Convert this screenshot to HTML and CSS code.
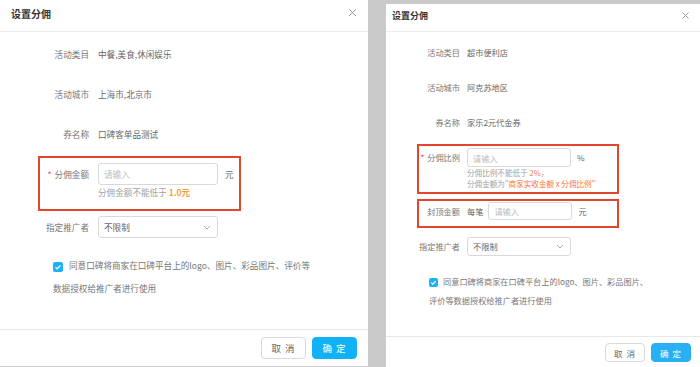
FILE: index.html
```html
<!DOCTYPE html>
<html lang="zh-CN">
<head>
    <meta charset="UTF-8">
    <meta name="viewport" content="width=device-width, initial-scale=1.0">
    <title>设置分佣</title>
    <link rel="stylesheet" href="styles.css">
</head>
<body>
    <!-- 金额模式 -->
    <div class="dialog dialog-a">
        <div class="dialog-head">
            <span class="dialog-title">设置分佣</span>
            <svg class="dialog-close" width="9" height="9" viewBox="0 0 9 9"><path d="M1 1l7 7M8 1l-7 7"/></svg>
        </div>
        <div class="dialog-body">
            <div class="info-list">
                <div class="row"><span class="row-label">活动类目</span><span class="row-value">中餐,美食,休闲娱乐</span></div>
                <div class="row"><span class="row-label">活动城市</span><span class="row-value">上海市,北京市</span></div>
                <div class="row"><span class="row-label">券名称</span><span class="row-value">口碑客单品测试</span></div>
            </div>
            <div class="mark">
                <div class="row">
                    <span class="row-label"><i class="req">*</i>分佣金额</span>
                    <div class="field">
                        <div class="field-line">
                            <input class="input" type="text" placeholder="请输入">
                            <span class="unit">元</span>
                        </div>
                        <div class="hint">分佣金额不能低于 <b class="warn">1.0元</b></div>
                    </div>
                </div>
            </div>
            <div class="row select-row">
                <span class="row-label">指定推广者</span>
                <div class="select">
                    <span>不限制</span>
                    <svg width="8" height="5" viewBox="0 0 8 5"><path d="M1 1l3 3 3-3"/></svg>
                </div>
            </div>
            <label class="agree">
                <span class="check"><svg width="10" height="10" viewBox="0 0 10 10"><path d="M2.5 5.2l1.7 1.7 3.3-3.5"/></svg></span>同意口碑将商家在口碑平台上的logo、图片、彩品图片、评价等数据授权给推广者进行使用
            </label>
        </div>
        <div class="dialog-foot">
            <button class="btn">取 消</button>
            <button class="btn btn-primary">确 定</button>
        </div>
    </div>

    <!-- 比例模式 -->
    <div class="dialog dialog-b">
        <div class="dialog-head">
            <span class="dialog-title">设置分佣</span>
            <svg class="dialog-close" width="7" height="7" viewBox="0 0 7 7"><path d="M.5 .5l6 6M6.5 .5l-6 6"/></svg>
        </div>
        <div class="dialog-body">
            <div class="info-list">
                <div class="row"><span class="row-label">活动类目</span><span class="row-value">超市便利店</span></div>
                <div class="row"><span class="row-label">活动城市</span><span class="row-value">阿克苏地区</span></div>
                <div class="row"><span class="row-label">券名称</span><span class="row-value">家乐2元代金券</span></div>
            </div>
            <div class="mark">
                <div class="row">
                    <span class="row-label"><i class="req">*</i>分佣比例</span>
                    <div class="field">
                        <div class="field-line">
                            <input class="input" type="text" placeholder="请输入">
                            <span class="unit">%</span>
                        </div>
                        <div class="hint">分佣比例不能低于 <span class="warn">2%</span>，</div>
                        <div class="hint">分佣金额为<span class="warn">"商家实收金额 x 分佣比例"</span></div>
                    </div>
                </div>
            </div>
            <div class="mark mark-cap">
                <div class="row">
                    <span class="row-label">封顶金额</span>
                    <div class="field-line">
                        <span class="prefix">每笔</span>
                        <input class="input input-sm" type="text" placeholder="请输入">
                        <span class="unit">元</span>
                    </div>
                </div>
            </div>
            <div class="row select-row">
                <span class="row-label">指定推广者</span>
                <div class="select">
                    <span>不限制</span>
                    <svg width="8" height="5" viewBox="0 0 8 5"><path d="M1 1l3 3 3-3"/></svg>
                </div>
            </div>
            <label class="agree">
                <span class="check"><svg width="9" height="9" viewBox="0 0 10 10"><path d="M2.5 5.2l1.7 1.7 3.3-3.5"/></svg></span>同意口碑将商家在口碑平台上的logo、图片、彩品图片、评价等数据授权给推广者进行使用
            </label>
        </div>
        <div class="dialog-foot">
            <button class="btn">取 消</button>
            <button class="btn btn-primary">确 定</button>
        </div>
    </div>
</body>
</html>
```

FILE: styles.css
```css
* {
    box-sizing: border-box;
}

body {
    margin: 0;
    height: 367px;
    overflow: hidden;
    background: #cacaca;
    font-family: "Noto Sans CJK SC", "Noto Sans", sans-serif;
    display: flex;
    align-items: flex-start;
    gap: 18px;
}

.dialog {
    background: #fff;
    display: flex;
    flex-direction: column;
}

.dialog-head {
    display: flex;
    justify-content: space-between;
    align-items: flex-start;
    border-bottom: 1px solid #ececec;
}

.dialog-title {
    color: #333;
    font-weight: bold;
}

.dialog-close path {
    stroke: #999;
    stroke-width: 1;
    fill: none;
}

.dialog-body {
    display: flex;
    flex-direction: column;
    align-items: flex-start;
}

.info-list {
    display: flex;
    flex-direction: column;
}

.row {
    display: flex;
    align-items: flex-start;
}

.row-label {
    color: #777;
    text-align: right;
    white-space: nowrap;
}

.row-value {
    color: #666;
}

.req {
    font-style: normal;
    color: #f04a3a;
    margin-right: 3px;
}

.mark {
    border: 2px solid #e2462f;
    margin-left: -2px;
}

.field-line {
    display: flex;
    align-items: center;
}

.input {
    border: 1px solid #d9d9d9;
    border-radius: 3px;
    font-family: inherit;
    font-size: inherit;
    color: #555;
    outline: none;
}

.input::placeholder {
    color: #bdbdbd;
}

.unit, .prefix {
    color: #666;
}

.hint {
    color: #a3a3a3;
    white-space: nowrap;
}

.warn {
    color: #f5a03b;
    font-weight: bold;
}

.select {
    display: flex;
    justify-content: space-between;
    align-items: center;
    border: 1px solid #d9d9d9;
    border-radius: 3px;
    color: #666;
}

.select path {
    stroke: #aaa;
    stroke-width: 1;
    fill: none;
}

.agree {
    display: block;
    color: #777;
}

.check {
    display: inline-flex;
    vertical-align: middle;
    background: #1db1f5;
    border-radius: 2px;
}

.check path {
    stroke: #fff;
    stroke-width: 1.3;
    fill: none;
}

.dialog-foot {
    display: flex;
    justify-content: flex-end;
    gap: 6px;
    border-top: 1px solid #e8e8e8;
}

.btn {
    border: 1px solid #d9d9d9;
    border-radius: 4px;
    background: #fff;
    color: #666;
    font-family: inherit;
    padding: 0;
    letter-spacing: 1px;
}

.btn-primary {
    background: #10b1f7;
    border-color: #10b1f7;
    color: #fff;
}

/* 左侧弹窗 */
.dialog-a {
    width: 368px;
    height: 366px;
    font-size: 8.6px;
}

.dialog-a .dialog-head {
    height: 32px;
    padding: 0 11px;
}

.dialog-a .dialog-title {
    font-size: 10px;
    line-height: 27px;
}

.dialog-a .dialog-close {
    margin-top: 8px;
}

.dialog-a .dialog-body {
    height: 297px;
    padding: 11px 0 0 40px;
}

.dialog-a .info-list {
    gap: 18px;
}

.dialog-a .row {
    line-height: 22px;
}

.dialog-a .row-label {
    width: 49px;
    margin-right: 9px;
}

.dialog-a .mark {
    width: 203px;
    margin-top: 11px;
    padding: 5px 0 10px;
}

.dialog-a .input {
    width: 120px;
    height: 22px;
    padding: 0 5px;
}

.dialog-a .unit {
    margin-left: 7px;
}

.dialog-a .hint {
    line-height: 14px;
}

.dialog-a .select {
    width: 120px;
    height: 22px;
    padding: 0 6px 0 5px;
}

.dialog-a .select-row {
    margin-top: 5px;
}

.dialog-a .agree {
    width: 260px;
    margin: 16px 0 0 13px;
    line-height: 23px;
}

.dialog-a .check {
    margin-right: 6px;
}

.dialog-a .dialog-foot {
    height: 37px;
    padding: 7px 11px 0;
}

.dialog-a .btn {
    width: 45px;
    height: 22px;
    font-size: 9.5px;
}

/* 右侧弹窗 */
.dialog-b {
    width: 314px;
    height: 363px;
    margin-top: 4px;
    font-size: 8.2px;
}

.dialog-b .dialog-head {
    height: 28px;
    padding: 0 11px 0 6px;
}

.dialog-b .dialog-title {
    font-size: 9px;
    line-height: 24px;
}

.dialog-b .dialog-close {
    margin-top: 8px;
}

.dialog-b .dialog-body {
    height: 304px;
    padding: 11px 0 0 33px;
}

.dialog-b .info-list {
    gap: 16px;
}

.dialog-b .row {
    line-height: 19px;
}

.dialog-b .row-label {
    width: 41px;
    margin-right: 7px;
}

.dialog-b .mark {
    width: 202px;
    margin-top: 12px;
    padding: 2px 0 3px;
}

.dialog-b .mark-cap {
    margin-top: 5px;
    padding: 1px 0 6px;
}

.dialog-b .mark-cap .row {
    line-height: 18px;
}

.dialog-b .input {
    width: 104px;
    height: 19px;
    padding: 0 5px;
}

.dialog-b .input-sm {
    width: 84px;
    height: 18px;
    margin-left: 5px;
}

.dialog-b .unit {
    margin-left: 6px;
}

.dialog-b .hint {
    font-size: 7.6px;
    line-height: 11px;
}

.dialog-b .hint:first-of-type {
    margin-top: 1px;
}

.dialog-b .warn {
    color: #f7773c;
    font-weight: normal;
}

.dialog-b .select {
    width: 104px;
    height: 19px;
    padding: 0 6px 0 5px;
}

.dialog-b .select-row {
    margin-top: 9px;
}

.dialog-b .agree {
    width: 222px;
    margin: 16px 0 0 10px;
    line-height: 19px;
}

.dialog-b .check {
    margin-right: 5px;
}

.dialog-b .dialog-foot {
    height: 31px;
    padding: 6px 9px 0;
}

.dialog-b .btn {
    width: 40px;
    height: 19px;
    font-size: 8.5px;
}

.dialog-b .btn-primary {
    background: #29b0f2;
    border-color: #29b0f2;
}
```
